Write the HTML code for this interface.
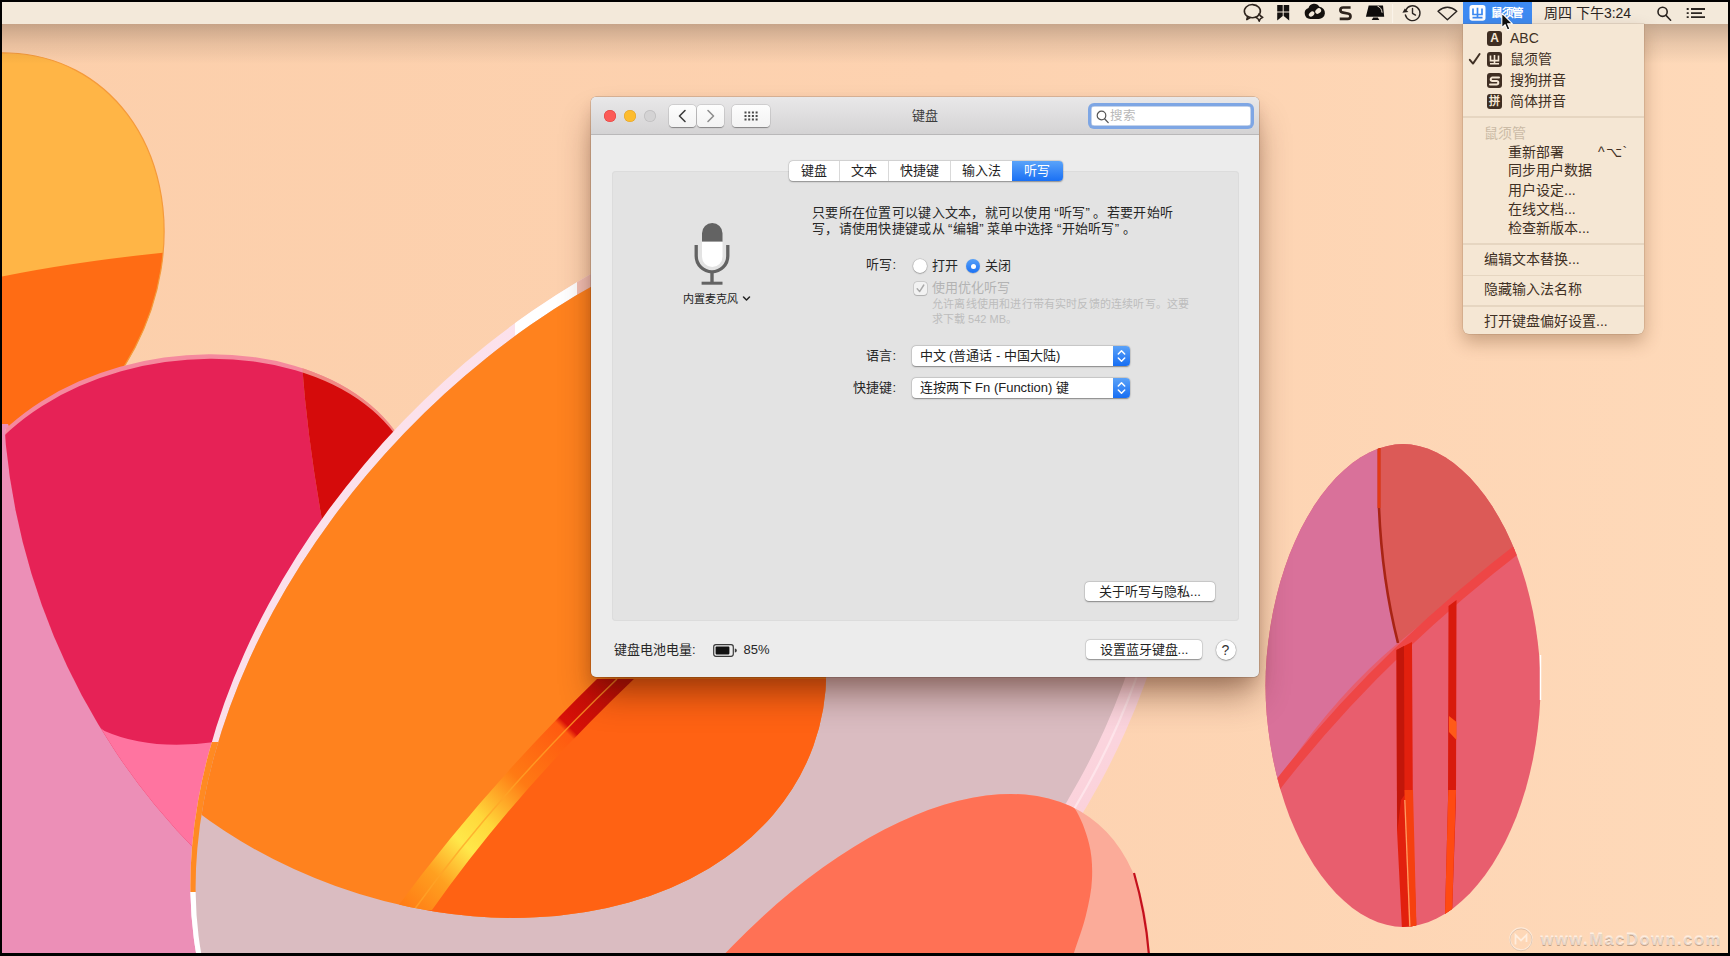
<!DOCTYPE html><html lang="zh-CN"><head><meta charset="utf-8"><title>键盘</title><style>
*{box-sizing:border-box;margin:0;padding:0}
html,body{width:1730px;height:956px;overflow:hidden;background:#000}
body{font-family:"Liberation Sans", sans-serif;position:relative;color:#262626;font-size:13px}
#screen{position:absolute;left:2px;top:2px;width:1726px;height:951px;overflow:hidden;background:#fccfab}
#screen>svg#wall{left:-2px !important;top:-2px !important}
.abs{position:absolute;white-space:nowrap}
#menubar{position:absolute;left:-2px;top:0;width:1730px;height:22px;background:#f3e9da;border-bottom:0}
#menubar .t{position:absolute;top:0;height:22px;line-height:22px;font-size:14px;color:#2a2420;white-space:nowrap}
#hl{position:absolute;left:1463px;top:0;width:69px;height:22px;background:#3d8af2}
/* dropdown */
#dd{position:absolute;left:1461px;top:22px;width:181px;height:310px;background:#f5e7d4;border-radius:0 0 6px 6px;box-shadow:0 8px 18px rgba(90,50,20,.32),0 0 0 .5px rgba(120,80,50,.25)}
#dd .i{position:absolute;left:0;height:19px;line-height:19px;font-size:14px;color:#3f3024;white-space:nowrap}
#dd .sep{position:absolute;left:0;width:181px;height:1.5px;background:#e6d6c1}
#dd .ic{position:absolute;left:24px;width:15px;height:15px;border-radius:3px;background:#3f2e22;color:#f5e7d4;font-size:11px;line-height:15px;text-align:center;font-weight:bold;overflow:hidden}
/* window */
#win{position:absolute;left:589px;top:95px;width:668px;height:580px;border-radius:5px;background:#ececec;box-shadow:0 22px 34px -4px rgba(60,20,0,.42),0 8px 16px -2px rgba(60,20,0,.16),0 0 0 .5px rgba(0,0,0,.26)}
#tb{position:absolute;left:0;top:0;width:668px;height:38px;border-radius:5px 5px 0 0;background:linear-gradient(#e9e8e9,#d4d3d4);border-bottom:1px solid #b9b8b9}
.tl{position:absolute;top:13px;width:12px;height:12px;border-radius:6px}
.nb{position:absolute;top:8px;height:22px;background:linear-gradient(#fdfdfd,#f3f3f3);border-radius:4px;box-shadow:0 .5px 1px rgba(0,0,0,.35),0 0 0 .5px rgba(0,0,0,.12)}
#panel{position:absolute;left:21px;top:74px;width:627px;height:450px;background:#e3e3e3;border-radius:4px;box-shadow:inset 0 0 0 1px #dcdcdc}
#tabs{position:absolute;left:198px;top:63.5px;width:273.5px;height:20px;border-radius:4px;background:#fff;box-shadow:0 .5px 1.5px rgba(0,0,0,.35),0 0 0 .5px rgba(0,0,0,.1)}
#tabs .tab{position:absolute;top:0;height:20px;line-height:19.5px;text-align:center;font-size:13px;color:#222}
#tabs .d{position:absolute;top:0;width:1px;height:20px;background:#d9d9d9}
.btn{position:absolute;height:19px;line-height:19px;background:#fff;border-radius:4px;text-align:center;font-size:13px;color:#222;box-shadow:0 .5px 1.5px rgba(0,0,0,.38),0 0 0 .5px rgba(0,0,0,.1)}
.pop{position:absolute;left:320.5px;width:218.5px;height:20px;line-height:20px;background:#fff;border-radius:4px;font-size:13px;color:#222;padding-left:8px;box-shadow:0 .5px 1.5px rgba(0,0,0,.38),0 0 0 .5px rgba(0,0,0,.1)}
.pop .st{position:absolute;right:0;top:0;width:17px;height:20px;border-radius:0 4px 4px 0;background:linear-gradient(#5ba2f8,#176ef3)}
.ql{margin-left:3.3px}.qr{margin-right:3.3px}
.w{position:absolute;white-space:nowrap;font-size:13px;color:#262626;line-height:16px}
</style></head><body><div id="screen">
<svg id="wall" width="1730" height="956" viewBox="0 0 1730 956" style="position:absolute;left:0;top:0">
<defs>
<linearGradient id="bg" x1="0" x2="1" y1="0" y2="0">
<stop offset="0" stop-color="#fccfab"/><stop offset="0.55" stop-color="#fdd2b0"/><stop offset="1" stop-color="#fed9b9"/>
</linearGradient>
<linearGradient id="topsh" x1="0" x2="0" y1="0" y2="1">
<stop offset="0" stop-color="#000" stop-opacity="0.215"/><stop offset="0.22" stop-color="#000" stop-opacity="0.15"/><stop offset="0.5" stop-color="#000" stop-opacity="0.08"/><stop offset="1" stop-color="#000" stop-opacity="0"/>
</linearGradient>
<clipPath id="cYellow"><ellipse cx="-25.5" cy="264.1" rx="180.9" ry="218.7" transform="rotate(-152.50 -25.5 264.1)" /></clipPath>
<clipPath id="cTop"><path d="M-43.8,545.1 A232.1,159.2 171.98 0 1 415.8,480.3 L520,900 L-60,900 Z"/></clipPath>
<clipPath id="cTop1"><path d="M-42.8,549.6 A232.1,159.2 171.98 0 1 416.8,484.8 L520,900 L-60,900 Z"/></clipPath>
<clipPath id="cLeft"><circle cx="673.5" cy="379.4" r="670.8"/></clipPath>
<clipPath id="cDisc"><ellipse cx="684.8" cy="692.8" rx="391.3" ry="586.2" transform="rotate(43.82 684.8 692.8)" /></clipPath>
<clipPath id="cDiscIn"><ellipse cx="676.7" cy="694.8" rx="377.7" ry="572.6" transform="rotate(43.82 676.7 694.8)" /></clipPath>
<clipPath id="cOrange"><ellipse cx="435.5" cy="609.4" rx="294.1" ry="401.8" transform="rotate(109.88 435.5 609.4)" /><path d="M100,100 L800,100 L800,600 L435,609 L212,800 L100,800 Z"/></clipPath>
<clipPath id="cSalmon"><ellipse cx="835.1" cy="1175.7" rx="226.5" ry="439.6" transform="rotate(-144.64 835.1 1175.7)" /></clipPath>
<clipPath id="cRight"><path d="M1540.5,685.5 L1540.2,699.6 L1539.3,714.5 L1537.7,729.5 L1535.6,744.6 L1532.9,759.5 L1529.6,774.3 L1525.8,788.7 L1521.4,802.8 L1516.5,816.4 L1511.0,829.5 L1505.2,842.0 L1498.8,853.8 L1492.1,864.9 L1485.0,875.3 L1477.5,884.8 L1469.8,893.4 L1461.8,901.1 L1453.6,907.9 L1445.2,913.7 L1436.6,918.4 L1428.1,922.2 L1419.5,924.8 L1411.0,926.5 L1403.0,927.0 L1395.0,926.5 L1386.5,924.8 L1377.9,922.2 L1369.4,918.4 L1360.8,913.7 L1352.4,907.9 L1344.2,901.1 L1336.2,893.4 L1328.5,884.8 L1321.0,875.3 L1313.9,864.9 L1307.2,853.8 L1300.8,842.0 L1295.0,829.5 L1289.5,816.4 L1284.6,802.8 L1280.2,788.7 L1276.4,774.3 L1273.1,759.5 L1270.4,744.6 L1268.3,729.5 L1266.7,714.5 L1265.8,699.6 L1265.5,685.5 L1265.8,671.4 L1266.7,656.5 L1268.3,641.5 L1270.4,626.4 L1273.1,611.5 L1276.4,596.7 L1280.2,582.3 L1284.6,568.2 L1289.5,554.6 L1295.0,541.5 L1300.8,529.0 L1307.2,517.2 L1313.9,506.1 L1321.0,495.7 L1328.5,486.2 L1336.2,477.6 L1344.2,469.9 L1352.4,463.1 L1360.8,457.3 L1369.4,452.6 L1377.9,448.8 L1386.5,446.2 L1395.0,444.5 L1403.0,444.0 L1411.0,444.5 L1419.5,446.2 L1428.1,448.8 L1436.6,452.6 L1445.2,457.3 L1453.6,463.1 L1461.8,469.9 L1469.8,477.6 L1477.5,486.2 L1485.0,495.7 L1492.1,506.1 L1498.8,517.2 L1505.2,529.0 L1511.0,541.5 L1516.5,554.6 L1521.4,568.2 L1525.8,582.3 L1529.6,596.7 L1532.9,611.5 L1535.6,626.4 L1537.7,641.5 L1539.3,656.5 L1540.2,671.4 Z"/></clipPath>
<linearGradient id="rimg" gradientUnits="userSpaceOnUse" x1="300" y1="400" x2="1150" y2="700"><stop offset="0" stop-color="#fce2ec"/><stop offset="0.5" stop-color="#fbdde8"/><stop offset="0.8" stop-color="#fbd3dc"/><stop offset="1" stop-color="#fac9d3"/></linearGradient>
<clipPath id="cRimR"><rect x="1000" y="600" width="200" height="260"/></clipPath>
<linearGradient id="stripe" gradientUnits="userSpaceOnUse" x1="620" y1="679" x2="400" y2="906">
<stop offset="0" stop-color="#b80c06"/><stop offset="0.22" stop-color="#d81008"/><stop offset="0.24" stop-color="#ff5a10"/>
<stop offset="0.45" stop-color="#ff7a14"/><stop offset="0.62" stop-color="#ffd83a"/><stop offset="0.72" stop-color="#ffe84a"/><stop offset="0.85" stop-color="#ffa020"/><stop offset="1" stop-color="#ff7a14"/>
</linearGradient>
</defs>
<rect width="1730" height="956" fill="url(#bg)"/>
<!-- yellow ellipse -->
<g clip-path="url(#cYellow)">
<rect x="-10" y="0" width="200" height="500" fill="#ffb546"/>
<path d="M-10,279 Q70,262 170,252 L190,500 L-10,500 Z" fill="#ff6c14"/>
</g>
<ellipse cx="-25.5" cy="264.1" rx="180.9" ry="218.7" transform="rotate(-152.50 -25.5 264.1)" fill="none" stroke="#f59a3a" stroke-width="1.2"/>
<!-- light pink -->
<path d="M0,424 L8,424 L30,480 L100,660 L260,880 L260,956 L0,956 Z" fill="#ec8fb7"/>
<!-- crimson + hot pink -->
<g clip-path="url(#cLeft)"><g clip-path="url(#cTop)">
<rect x="0" y="340" width="520" height="560" fill="#f58a9e"/>
<path d="M0,470 L6,426 L52,391 L84,377 L84,340 L0,340Z" fill="#f2a6d6"/>
<path d="M-42.8,549.6 A232.1,159.2 171.98 0 1 416.8,484.8 L520,900 L-60,900 Z" fill="#e62256"/>
<path d="M301,350 Q306,430 322,520 L520,520 L520,350 Z" fill="#f08a84"/>
<path d="M301,350 Q306,430 322,520 L520,520 L520,350 Z" fill="#d50b0b" clip-path="url(#cTop1)"/>
<path d="M60,700 L104.6,731 Q150,751 215,742 L300,742 L300,900 L60,900 Z" fill="#ff74a0"/>
</g></g>
<!-- disc -->
<ellipse cx="684.8" cy="692.8" rx="391.3" ry="586.2" transform="rotate(43.82 684.8 692.8)" fill="url(#rimg)"/>
<g clip-path="url(#cDisc)"><rect x="180" y="742" width="60" height="150" fill="#ff8a22"/><rect x="180" y="892" width="60" height="70" fill="#fff"/><rect x="515" y="270" width="62" height="80" fill="#fff"/><rect x="577" y="260" width="20" height="40" fill="#f3c0b4"/></g>
<g clip-path="url(#cRimR)"><ellipse cx="680.8" cy="693.8" rx="384.5" ry="579.4" transform="rotate(43.82 680.8 693.8)" fill="none" stroke="#fee4ea" stroke-width="2.200"/></g>
<g clip-path="url(#cDiscIn)">
<rect x="150" y="150" width="1100" height="820" fill="#dabcc1"/>
<g clip-path="url(#cOrange)">
<rect x="150" y="150" width="800" height="820" fill="#ff821e"/>
<path d="M634,679 L900,679 L900,956 L380,956 L432,903 Q516,791 634,679 Z" fill="#ff6213"/>
<path d="M597,679 L634,679 Q516,791 432,910 L395,910 Q482,791 597,679 Z" fill="url(#stripe)"/>
<path d="M617,679 Q500,791 414,910" stroke="#ffa428" stroke-width="1.5" fill="none" opacity="0.75"/>
</g>
</g>
<!-- salmon -->
<ellipse cx="835.1" cy="1175.7" rx="226.5" ry="439.6" transform="rotate(-144.64 835.1 1175.7)" fill="#fbab99"/>
<g clip-path="url(#cSalmon)">
<path d="M700,975 L700,780 L1050,790 L1050.0,790.0 C1054.0,792.9 1067.5,798.7 1074.0,807.6 C1080.5,816.5 1086.0,831.6 1089.0,843.5 C1092.0,855.4 1092.5,867.1 1092.0,879.0 C1091.5,890.9 1089.0,902.7 1086.0,915.0 C1083.0,927.3 1077.3,942.7 1074.0,952.7 C1070.7,962.7 1067.3,971.3 1066.0,975.0 Z" fill="#ff7155"/>
</g>
<path d="M1134,873 Q1146,915 1149,956" stroke="#c4101c" stroke-width="2.2" fill="none"/>
<!-- right ellipse -->
<g clip-path="url(#cRight)">
<rect x="1250" y="430" width="310" height="510" fill="#e85e6e"/>
<path d="M1250,430 L1379,430 L1379,508 Q1382,580 1398,643 Q1330,700 1277,783 L1250,800 Z" fill="#d9719a"/>
<path d="M1379,430 L1560,430 L1560,520 L1519,548 Q1450,600 1398,643 Q1382,580 1379,508 Z" fill="#dc5a57"/>
<path d="M1379,440 L1379,508 Q1382,580 1398,643" stroke="#a82414" stroke-width="2.6" fill="none"/>
<path d="M1379,440 L1379,508" stroke="#e23a14" stroke-width="3" fill="none"/>
<path d="M1545,528 Q1380,650 1270,795" stroke="#ee4646" stroke-width="9" fill="none"/>
<path d="M1396.5,650 L1412,642 L1413,830 L1416.5,930 L1402,930 L1397,830 Z" fill="#e2200e"/>
<path d="M1396.5,650 L1404,646 L1404.5,795 L1401,800 L1397.5,830 L1397,800 Z" fill="#c2160a"/>
<path d="M1404.500,790 L1413,790 L1416.500,930 L1409,930 Z" fill="#f6400f"/>
<path d="M1404.800,800 L1410,930" stroke="#ff9a62" stroke-width="1.300" fill="none"/>
<path d="M1448.500,606 L1456.500,600 L1456,800 L1452,915 L1445,915 L1448,800 Z" fill="#d81a0c"/>
<path d="M1448.300,790 L1456,790 L1452,915 L1445,915 Z" fill="#ff4a12"/>
<path d="M1449,716 L1456.500,722 L1456.500,740 L1449,732 Z" fill="#ff5a18"/>
</g>
<path d="M1540.5,655 L1540.5,700" stroke="#fff" stroke-width="1.5"/>
<!-- shadow under menubar -->
<rect x="0" y="24" width="1730" height="40" fill="url(#topsh)"/>
</svg>

<div id="menubar">
<div id="hl"></div>
<svg class="abs" style="left:0;top:0" width="1730" height="22" viewBox="0 2 1730 22">
<g fill="none" stroke="#2e241d" stroke-width="1.600" stroke-linecap="round" stroke-linejoin="round">
<!-- chat bubble -->
<path d="M1255.900,17.100A8,6.600 0 1 1 1260.100,12.900"/>
<path d="M1247.700,16.600l-.9,3l3.400,-2.100"/>
<path d="M1259.200,13.500q.6,3 3.700,3.900q-3.100,.9 -3.700,3.900q-.6,-3 -3.700,-3.900q3.100,-.9 3.700,-3.900z" stroke-width="1.400"/>
</g>
<!-- bookmark -->
<path d="M1277.200,5.100h5.500v6.500h-5.500zM1283.700,5.100h5.500v6.500h-5.500zM1277.200,12.500h5.500v3.400l-5.500,4.500zM1283.700,12.500h5.500v7.900l-5.500,-4.500z" fill="#14110f"/>
<!-- creative cloud -->
<path d="M1310.400,18.900a5.600,5.600 0 0 1 -1.900,-10.900a6,6 0 0 1 10.900,-1.200a5.700,5.700 0 0 1 -1.100,12.100z" fill="#15110e"/>
<ellipse cx="1311.600" cy="14.100" rx="3.100" ry="2.200" transform="rotate(-40 1311.600 14.100)" fill="#f3e9da"/>
<ellipse cx="1318.200" cy="11" rx="3.200" ry="2.400" transform="rotate(-40 1318.200 11)" fill="#f3e9da"/>
<path d="M1309.500,11.500q2.500,-2 4.500,.5" stroke="#15110e" stroke-width="0" fill="none"/>
<!-- S -->
<path d="M1350.600,7.500h-7.400q-2.800,0 -2.800,2.500q0,2.200 2.800,2.700l4.600,.8q2.700,.5 2.700,2.700q0,2.600 -2.800,2.600h-8" fill="none" stroke="#2e241d" stroke-width="2.700" stroke-linecap="butt" stroke-linejoin="round"/>
<!-- monitor -->
<path d="M1368.700,5.400h14.300l1.200,11.400h-18.300zM1373.200,17.400h4.600l1.500,2.600h-7.600z" fill="#0e0c0b"/>
<path d="M1377.500,6.200q4,1.200 4.600,6.500" stroke="#f3e9da" stroke-width="1" fill="none"/>
<path d="M1392.600,4v19" stroke="#fbf4ea" stroke-width="1"/>
<!-- time machine -->
<g fill="none" stroke="#2a2420" stroke-width="1.4" stroke-linecap="round" stroke-linejoin="round">
<path d="M1405.800,10.200a7.400,7.400 0 1 1 -.4,4.800"/>
<path d="M1412.500,8.500v4.800l3,1.800"/>
</g>
<path d="M1402.400,12.800l6,-.8l-3.600,-3.600z" fill="#2a2420"/>
<!-- wifi -->
<path d="M1438,11.200q9.400,-7.800 18.800,0l-9.400,8.600z" fill="none" stroke="#2a2420" stroke-width="1.400" stroke-linejoin="round"/>
<!-- input icon -->
<rect x="1469.500" y="5" width="16" height="15.800" rx="2.800" fill="#fff"/>
<path d="M1473,8.500v6h9v-6M1477.500,7.800v9.600M1472.500,17.600h10" fill="none" stroke="#3d8af2" stroke-width="1.7"/>
<!-- search -->
<g fill="none" stroke="#2a2420" stroke-width="1.600" stroke-linecap="round"><circle cx="1662.600" cy="11.800" r="4.600"/><path d="M1666,15.400l4.600,4.800"/></g>
<!-- list -->
<g stroke="#2a2420" stroke-width="1.800"><path d="M1691,9h14M1691,13.100h11M1691,17.200h14"/><path d="M1686.700,9h2M1686.700,13.100h2M1686.700,17.200h2"/></g>
</svg>
<div class="t" style="left:1491px;font-size:11.5px;color:#fff;font-weight:bold;letter-spacing:-.3px">鼠须管</div>
<div class="t" style="left:1544px">周四 下午3:24</div>
</div>
<div id="dd"><div class="ic" style="top:7.1px;font-size:12px">A</div><div class="i" style="top:5.1px;left:47px;">ABC</div><svg class="abs" style="left:5px;top:28.3px" width="14" height="14" viewBox="0 0 14 14"><path d="M1.800,7.800l3.200,3.800l6.600,-9.600" fill="none" stroke="#3f3024" stroke-width="1.900" stroke-linecap="round" stroke-linejoin="round"/></svg><div class="ic" style="top:27.8px"><svg width="15" height="15" viewBox="0 0 15 15" style="display:block"><path d="M3.500,3.600v5h8v-5M7.500,3v8.600M3,11.800h9" fill="none" stroke="#f5e7d4" stroke-width="1.600"/></svg></div><div class="i" style="top:25.8px;left:47px;">鼠须管</div><div class="ic" style="top:48.7px"><svg width="15" height="15" viewBox="0 0 15 15" style="display:block"><path d="M12,4.600h-6.600a1.700,1.700 0 0 0 0,3.400h4.200a1.700,1.700 0 0 1 0,3.400h-6.600" fill="none" stroke="#f5e7d4" stroke-width="2" stroke-linecap="round"/></svg></div><div class="i" style="top:46.7px;left:47px;">搜狗拼音</div><div class="ic" style="top:70.0px;font-size:11px;font-weight:bold">拼</div><div class="i" style="top:68.0px;left:47px;">简体拼音</div><div class="sep" style="top:92.3px"></div><div class="i" style="top:99.5px;left:21px;color:#cbbba6">鼠须管</div><div class="i" style="top:118.7px;left:45px;">重新部署</div><div class="i" style="top:118.7px;left:135px;letter-spacing:1px">^⌥`</div><div class="i" style="top:137.3px;left:45px;">同步用户数据</div><div class="i" style="top:156.5px;left:45px;">用户设定...</div><div class="i" style="top:175.8px;left:45px;">在线文档...</div><div class="i" style="top:195.0px;left:45px;">检查新版本...</div><div class="sep" style="top:219.3px"></div><div class="i" style="top:225.5px;left:21px;">编辑文本替换...</div><div class="sep" style="top:250.7px"></div><div class="i" style="top:256.1px;left:21px;">隐藏输入法名称</div><div class="sep" style="top:281.3px"></div><div class="i" style="top:287.9px;left:21px;">打开键盘偏好设置...</div></div><div id="win"><div id="tb"><div class="tl" style="left:13px;background:#fc5b57;box-shadow:inset 0 0 0 .5px #de3f3b"></div><div class="tl" style="left:33px;background:#fdbc2e;box-shadow:inset 0 0 0 .5px #dea02a"></div><div class="tl" style="left:53px;background:#d4d3d4;box-shadow:inset 0 0 0 .8px #c0bfc0"></div><div class="nb" style="left:78px;width:27px"><svg width="27" height="22"><path d="M16,5.500l-5.500,5.500l5.500,5.500" fill="none" stroke="#3c3c3c" stroke-width="1.600" stroke-linecap="round" stroke-linejoin="round"/></svg></div><div class="nb" style="left:106px;width:27px"><svg width="27" height="22"><path d="M11,5.500l5.500,5.500l-5.500,5.500" fill="none" stroke="#8e8e8e" stroke-width="1.600" stroke-linecap="round" stroke-linejoin="round"/></svg></div><div class="nb" style="left:141px;width:38px"><svg width="38" height="22" fill="#4a4a4a"><rect x="12.5" y="6.5" width="2" height="2"/><rect x="12.5" y="10.0" width="2" height="2"/><rect x="12.5" y="13.5" width="2" height="2"/><rect x="16.2" y="6.5" width="2" height="2"/><rect x="16.2" y="10.0" width="2" height="2"/><rect x="16.2" y="13.5" width="2" height="2"/><rect x="19.9" y="6.5" width="2" height="2"/><rect x="19.9" y="10.0" width="2" height="2"/><rect x="19.9" y="13.5" width="2" height="2"/><rect x="23.6" y="6.5" width="2" height="2"/><rect x="23.6" y="10.0" width="2" height="2"/><rect x="23.6" y="13.5" width="2" height="2"/></svg></div><div class="abs" style="left:0;width:668px;text-align:center;top:11px;line-height:16px;font-size:13px;color:#3c3c3c">键盘</div><div class="abs" style="left:497px;top:6px;width:166px;height:26px;border-radius:6px;background:#7ea6e4"></div><div class="abs" style="left:500px;top:9px;width:160px;height:20px;border-radius:3.500px;background:#fff;box-shadow:inset 0 0 0 .5px #8aa8d8"></div><svg class="abs" style="left:504px;top:12px" width="16" height="16"><circle cx="6.500" cy="6.500" r="4.300" fill="none" stroke="#555" stroke-width="1.200"/><path d="M9.600,9.800l3.600,3.800" stroke="#555" stroke-width="1.300" stroke-linecap="round"/></svg><div class="abs" style="left:519px;top:11px;font-size:12.500px;line-height:16px;color:#b8b8b8">搜索</div></div><div id="panel"></div><div id="tabs"><div class="tab" style="left:0.0px;width:50.5px">键盘</div><div class="d" style="left:50.0px"></div><div class="tab" style="left:50.5px;width:49.0px">文本</div><div class="d" style="left:99.0px"></div><div class="tab" style="left:99.5px;width:62.0px">快捷键</div><div class="d" style="left:161.0px"></div><div class="tab" style="left:161.5px;width:61.5px">输入法</div><div class="tab" style="left:223.0px;width:50.5px;color:#fff;background:linear-gradient(#5aa3f9,#1a70f4);border-radius:0 4px 4px 0">听写</div></div><svg class="abs" style="left:99px;top:122px" width="44" height="70" viewBox="0 0 44 70">
<path d="M12,22.700v-8.450a10.250,10.250 0 0 1 20.500,0v8.450z" fill="#636363"/>
<path d="M12,22.700h20.500v15.050a10.250,10.250 0 0 1 -20.500,0z" fill="#fff"/>
<path d="M6.200,26v11a15.800,15.800 0 0 0 31.600,0v-11" fill="none" stroke="#636363" stroke-width="3.300"/>
<path d="M22,52.500v11" stroke="#636363" stroke-width="3.400" fill="none"/><rect x="11.600" y="62.700" width="20.900" height="3" fill="#636363"/>
</svg><div class="w" style="left:92.0px;top:193.5px;font-size:11px;color:#222">内置麦克风</div><svg class="abs" style="left:151px;top:198px" width="10" height="8"><path d="M1.500,2l3,3l3,-3" fill="none" stroke="#222" stroke-width="1.500" stroke-linecap="round" stroke-linejoin="round"/></svg><div class="w" style="left:221.0px;top:108.0px;letter-spacing:.28px">只要所在位置可以键入文本，就可以使用<span class="ql">“</span>听写<span class="qr">”</span>。若要开始听</div><div class="w" style="left:221.0px;top:124.0px;letter-spacing:.28px">写，请使用快捷键或从<span class="ql">“</span>编辑<span class="qr">”</span>菜单中选择<span class="ql">“</span>开始听写<span class="qr">”</span>。</div><div class="w" style="left:205.0px;top:160.0px;width:100px;text-align:right">听写:</div><div class="abs" style="left:322.2px;top:162.0px;width:14px;height:14px;border-radius:7px;background:#fff;box-shadow:0 .5px 1.5px rgba(0,0,0,.4),0 0 0 .5px rgba(0,0,0,.12)"></div><div class="w" style="left:341.0px;top:160.5px;">打开</div><div class="abs" style="left:375.4px;top:162.0px;width:14px;height:14px;border-radius:7px;background:linear-gradient(#56a0f8,#1c72f4);box-shadow:0 .5px 1px rgba(0,0,0,.3)"></div><div class="abs" style="left:379.9px;top:166.5px;width:5px;height:5px;border-radius:3px;background:#fff"></div><div class="w" style="left:394.0px;top:160.5px;">关闭</div><div class="abs" style="left:323.0px;top:184.5px;width:13px;height:13px;border-radius:3px;background:#f2f2f2;box-shadow:0 0 0 .5px rgba(0,0,0,.18),0 .5px 1px rgba(0,0,0,.15)"></div><svg class="abs" style="left:323.0px;top:184.5px" width="13" height="13"><path d="M3.200,6.800l2.400,2.800l4.200,-6.600" fill="none" stroke="#a9a9a9" stroke-width="1.400" stroke-linecap="round" stroke-linejoin="round"/></svg><div class="w" style="left:341.0px;top:183.0px;color:#b3b3b3">使用优化听写</div><div class="w" style="left:341.0px;top:199.0px;font-size:11px;color:#bdbdbd;letter-spacing:.19px">允许离线使用和进行带有实时反馈的连续听写。这要</div><div class="w" style="left:341.0px;top:214.0px;font-size:11px;color:#bdbdbd">求下载 542 MB。</div><div class="w" style="left:205.0px;top:251.0px;width:100px;text-align:right">语言:</div><div class="w" style="left:205.0px;top:283.0px;width:100px;text-align:right">快捷键:</div><div class="pop" style="top:249.0px">中文 (普通话 - 中国大陆)<div class="st"><svg width="17" height="20"><path d="M5.300,8l3.200,-3.200l3.200,3.200M5.300,12l3.200,3.200l3.200,-3.200" fill="none" stroke="#fff" stroke-width="1.500" stroke-linecap="round" stroke-linejoin="round"/></svg></div></div><div class="pop" style="top:281.0px">连按两下 Fn (Function) 键<div class="st"><svg width="17" height="20"><path d="M5.300,8l3.200,-3.200l3.200,3.200M5.300,12l3.200,3.200l3.200,-3.200" fill="none" stroke="#fff" stroke-width="1.500" stroke-linecap="round" stroke-linejoin="round"/></svg></div></div><div class="btn" style="left:494.0px;top:484.5px;width:130.0px">关于听写与隐私...</div><div class="btn" style="left:495.0px;top:543.0px;width:116.0px">设置蓝牙键盘...</div><div class="abs" style="left:624.5px;top:542.6px;width:20px;height:20px;border-radius:10px;background:#fff;box-shadow:0 .5px 1.5px rgba(0,0,0,.4),0 0 0 .5px rgba(0,0,0,.12);text-align:center;line-height:20px;font-size:14px;color:#333">?</div><div class="w" style="left:23.0px;top:544.6px;">键盘电池电量:</div><svg class="abs" style="left:122.0px;top:546.8px" width="25" height="14"><rect x=".7" y=".7" width="19.600" height="11.600" rx="2.200" fill="none" stroke="#3a3a3a" stroke-width="1.200"/><rect x="2.600" y="2.600" width="13.800" height="7.800" rx=".8" fill="#111"/><path d="M21.800,4.500v4a2,2 0 0 0 0,-4z" fill="#3a3a3a"/></svg><div class="w" style="left:152.5px;top:544.6px;">85%</div></div><div class="abs" style="left:1538.5px;top:926px;font-size:16.5px;font-weight:bold;line-height:22px;color:rgba(255,246,238,.62);text-shadow:0 1px 0 rgba(120,95,80,.45),0 -1px 0 rgba(255,255,255,.35);letter-spacing:1.55px">www.MacDown.com</div><svg class="abs" style="left:1506px;top:923.5px" width="26" height="26"><circle cx="13" cy="13" r="11" fill="none" stroke="rgba(255,246,238,.6)" stroke-width="1.600"/><circle cx="13" cy="13.800" r="11" fill="none" stroke="rgba(120,95,80,.22)" stroke-width="1"/><path d="M7.500,18.500v-9.500l5.500,5.500l5.500,-5.500v7" fill="none" stroke="rgba(255,246,238,.7)" stroke-width="1.800"/></svg><svg class="abs" style="left:1496px;top:8px" width="20" height="24" viewBox="1498 10 20 24"><path d="M1501.800,13.200v14.600l3.300,-3.100l2.300,5.300l2.500,-1.100l-2.300,-5.200h4.700z" fill="#111" stroke="#fff" stroke-width="1.100" stroke-linejoin="round"/></svg></div></body></html>
